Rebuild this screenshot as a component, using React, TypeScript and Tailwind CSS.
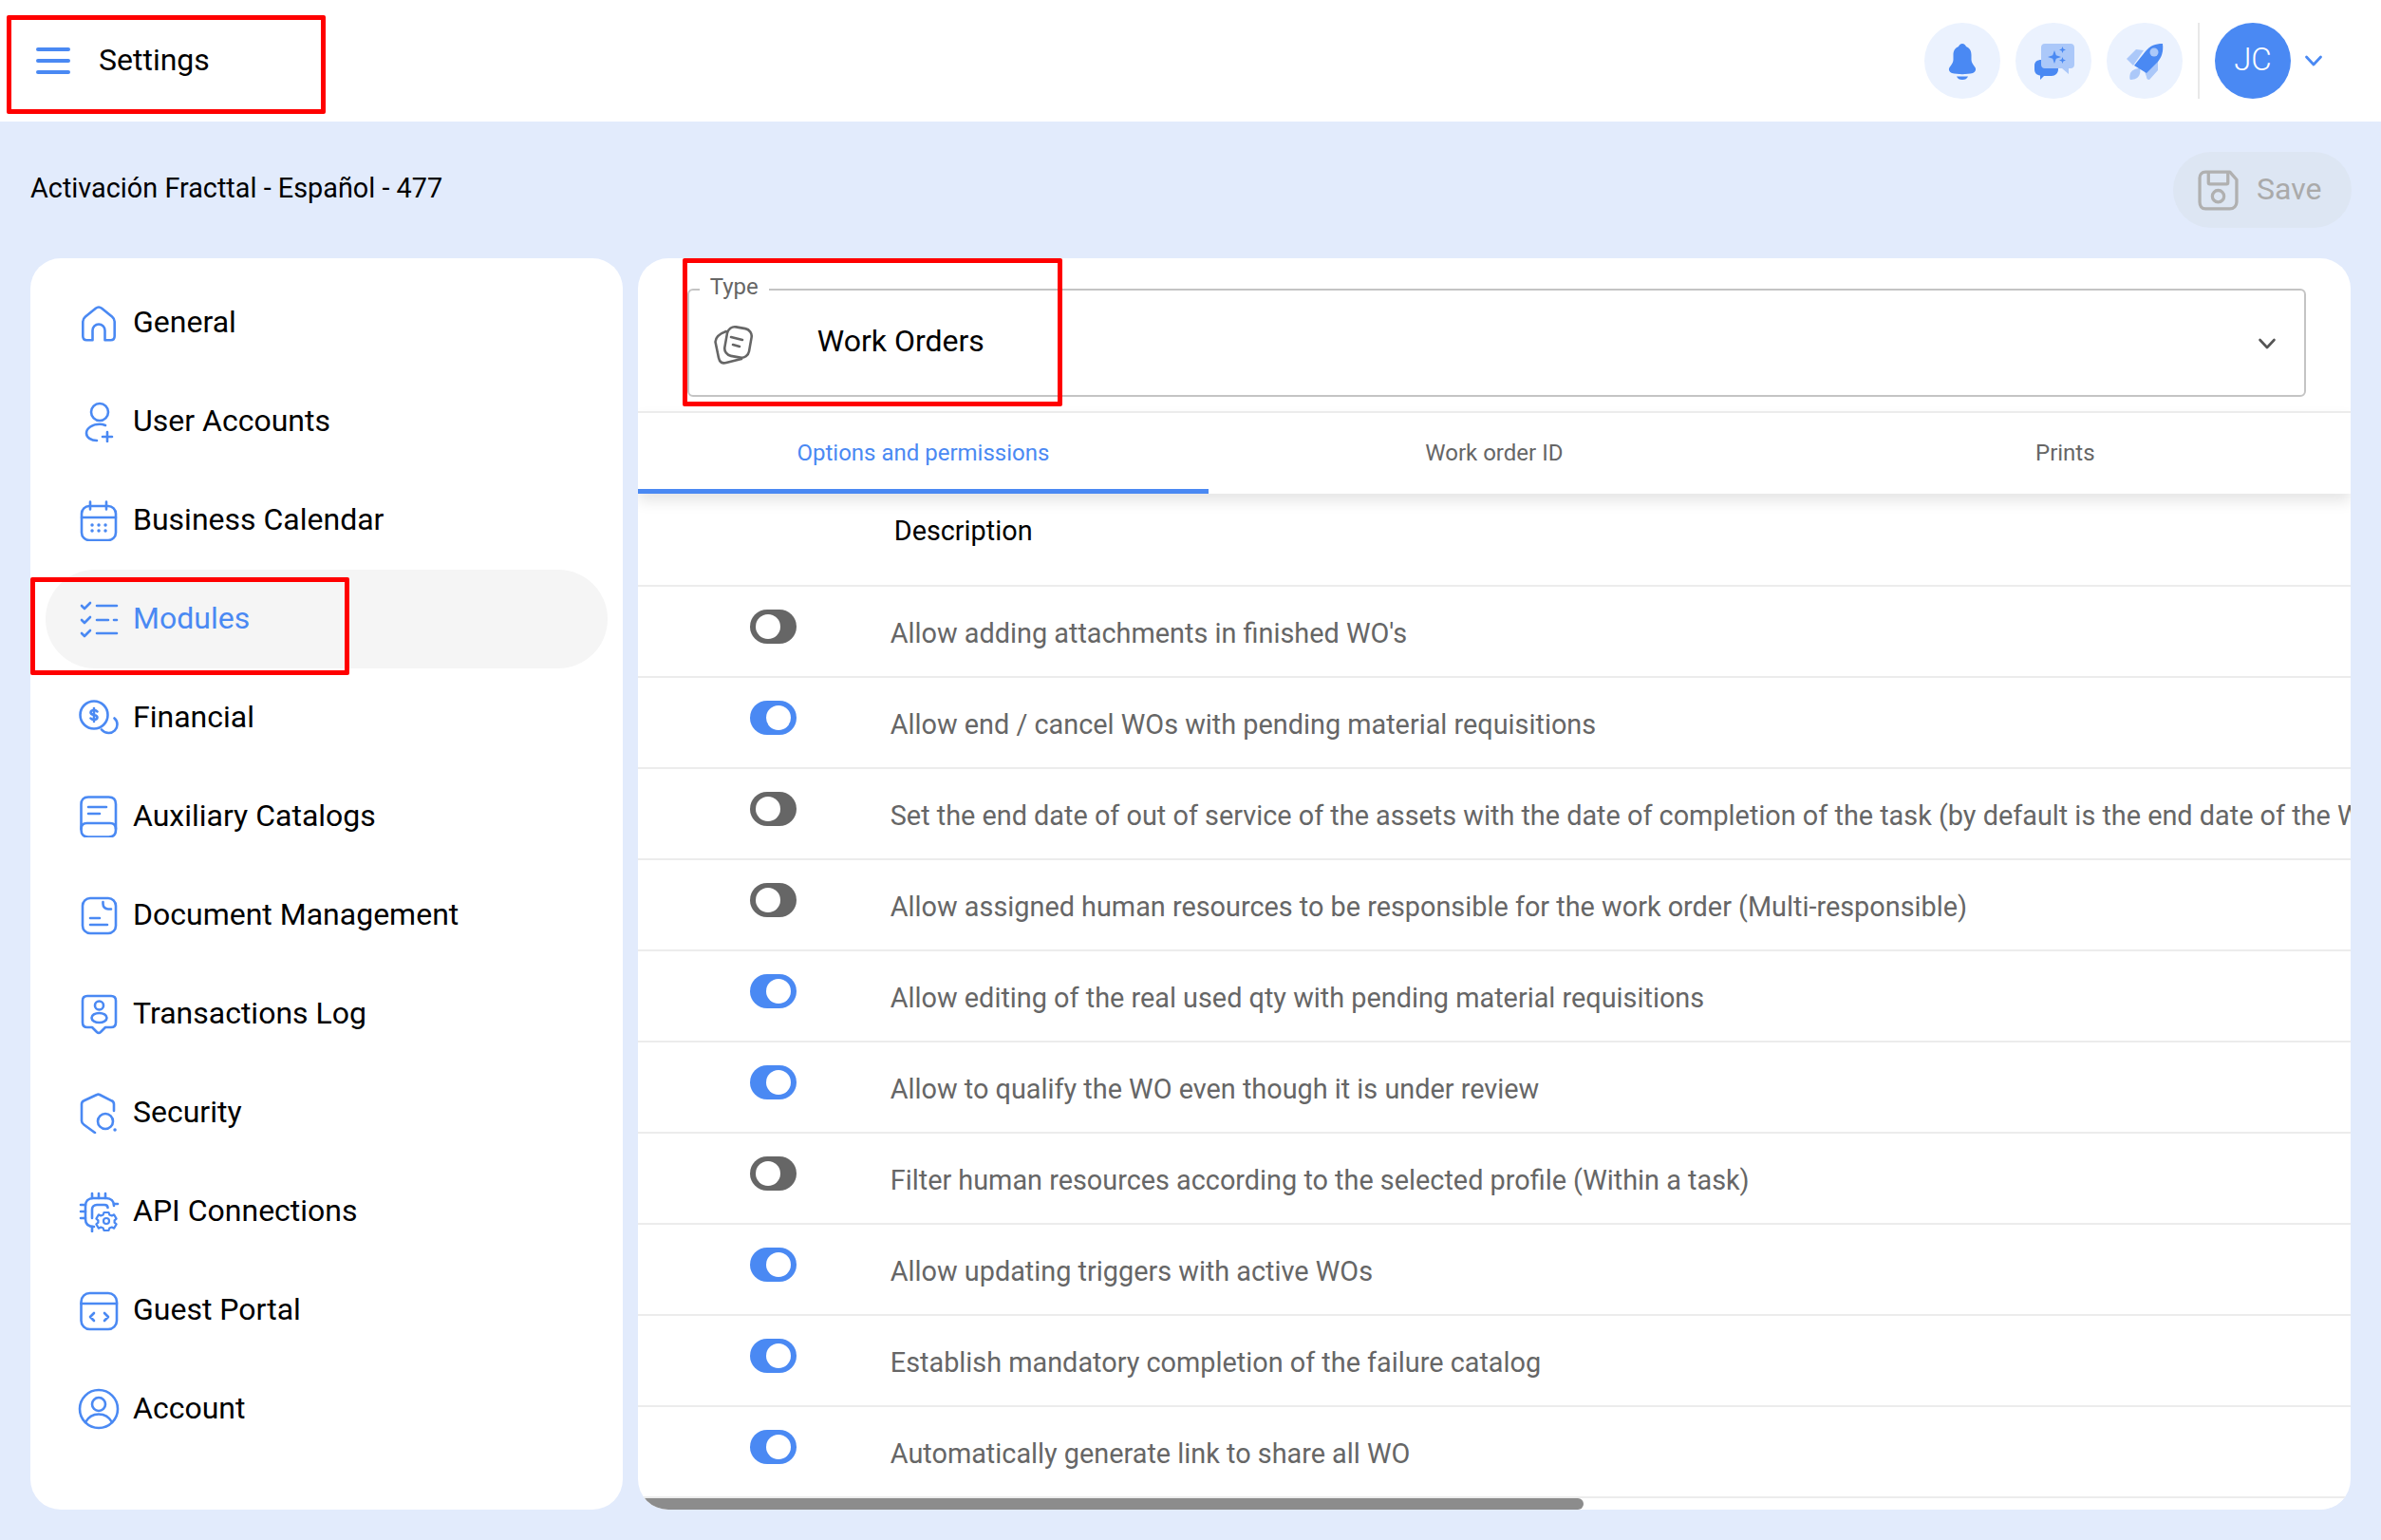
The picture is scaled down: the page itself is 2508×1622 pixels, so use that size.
import * as React from "react";

function Glyph({ children, className = "text-[#4a89f3]" }: { children: React.ReactNode; className?: string }) {
  return (
    <svg
      viewBox="0 0 44 44"
      fill="none"
      stroke="currentColor"
      strokeWidth="2.6"
      strokeLinecap="round"
      strokeLinejoin="round"
      className={`w-[44px] h-[44px] shrink-0 ${className}`}
    >
      {children}
    </svg>
  );
}

const navItems: { label: string; icon: React.ReactNode }[] = [
  {
    label: "General",
    icon: (
      <path d="M22 5.5c-1.2 0-2.2.5-3.2 1.3L8 15.5c-1.9 1.6-2.7 3-2.7 5.2V36c0 2.7 1.5 4.2 4.2 4.2h6V30c0-3.6 2.9-6.5 6.5-6.5s6.5 2.9 6.5 6.5v10.2h6c2.7 0 4.2-1.5 4.2-4.2V20.7c0-2.2-.8-3.6-2.7-5.2L25.2 6.8c-1-.8-2-1.3-3.2-1.3z" />
    ),
  },
  {
    label: "User Accounts",
    icon: (
      <>
        <circle cx="23" cy="12" r="9" />
        <path d="M29 26c-2-.8-4-1.2-6-1.2-7.500 0-14 4-14 9.500 0 4.500 5 7.700 11 7.700" />
        <path d="M31 33v10M26 38h10" />
      </>
    ),
  },
  {
    label: "Business Calendar",
    icon: (
      <>
        <rect x="4" y="7" width="36" height="36" rx="8" />
        <path d="M4 19h36M13 2.500v8M30 2.500v8" />
        <path d="M15 27h.1M22 27h.1M29 27h.1M15 33h.1M22 33h.1M29 33h.1" strokeWidth="3.4" />
      </>
    ),
  },
  {
    label: "Modules",
    icon: (
      <>
        <path d="M4 8l3 3 6-6M4 23l3 3 6-6M4 37l3 3 6-6" />
        <path d="M20 8h21M20 23h12M38 23h3M20 37h21" />
      </>
    ),
  },
  {
    label: "Financial",
    icon: (
      <>
        <circle cx="17" cy="19" r="14.500" />
        <path d="M20.500 15.500c-.7-1-1.900-1.500-3.500-1.500-2 0-3.500 1-3.500 2.500s1.500 2.100 3.500 2.500 3.500 1.100 3.500 2.500-1.500 2.500-3.500 2.500c-1.600 0-2.800-.5-3.500-1.500M17 12v14" />
        <path d="M38.500 22.500c2 1.700 3 4 3 6.500 0 5-4 9-9 9-3 0-5.500-1.200-7.500-3.500" />
      </>
    ),
  },
  {
    label: "Auxiliary Catalogs",
    icon: (
      <>
        <path d="M3.500 36V9c0-4.500 2.500-7.500 7.500-7.500h21.500c5 0 7.500 3 7.500 7.500v27c0 5-2.500 7.500-7.500 7.500H11c-5 0-7.500-2.500-7.500-7.500z" />
        <path d="M3.500 35c0-4 2.500-6 6-6h24.500c3.500 0 6 2 6 6" />
        <path d="M11 12h19M11 19h12" />
      </>
    ),
  },
  {
    label: "Document Management",
    icon: (
      <>
        <rect x="5" y="4" width="35" height="37" rx="8" />
        <path d="M26.500 8v2c0 3.500 2.500 5.500 5.500 5.500h3" />
        <path d="M13 25h10M13 32h18" />
      </>
    ),
  },
  {
    label: "Transactions Log",
    icon: (
      <>
        <path d="M10 3h25c3.500 0 5 1.700 5 5v23c0 3.300-1.500 5-5 5h-6l-5 5c-1.300 1.200-2.700 1.200-4 0l-5-5h-5c-3.500 0-5-1.700-5-5V8c0-3.300 1.500-5 5-5z" />
        <circle cx="22.500" cy="13" r="4.500" />
        <ellipse cx="22.500" cy="26" rx="8" ry="5" />
      </>
    ),
  },
  {
    label: "Security",
    icon: (
      <>
        <path d="M38 20v-7c0-1.800-.8-3-2.500-3.700L23 3c-1-.5-2-.5-3 0L6.500 9.300C4.800 10 4 11.200 4 13v17.500c0 1.800.8 3 2.300 4L18 43" />
        <circle cx="29" cy="31" r="8" />
        <path d="M39 40h.1" strokeWidth="3.400" />
      </>
    ),
  },
  {
    label: "API Connections",
    icon: (
      <>
        <path d="M17 38c-6 0-9-3-9-8V16c0-5 3-8 8-8h14c5 0 8 3 8 8" />
        <path d="M15 29V20c0-3 2-5 5-5h8c2 0 3.500 1 3.500 3" />
        <path d="M15 3v5M22 3v5M29 3v5M3 15h5M3 22h5M3 29h5M38 14h4M15 38v5" />
        <circle cx="30" cy="32" r="3" strokeWidth="2.200" />
        <path
          d="M27.500 23h5l.8 2.500 2.500 1 2.300-1.200 2.500 4.300-2 1.700v2.400l2 1.700-2.500 4.300-2.300-1.200-2.500 1-.8 2.500h-5l-.8-2.500-2.500-1-2.300 1.200-2.500-4.300 2-1.700v-2.400l-2-1.700 2.500-4.300 2.300 1.200 2.500-1z"
          strokeWidth="2.200"
        />
      </>
    ),
  },
  {
    label: "Guest Portal",
    icon: (
      <>
        <rect x="3.500" y="4" width="37.500" height="38" rx="9" />
        <path d="M3.500 15h37.500" />
        <path d="M17 25l-4 4 4 4M28 25l4 4-4 4" />
      </>
    ),
  },
  {
    label: "Account",
    icon: (
      <>
        <circle cx="22" cy="22" r="20" />
        <circle cx="22" cy="17" r="7" />
        <path d="M8 36c3-5.500 8-8.500 14-8.500s11 3 14 8.500" />
      </>
    ),
  },
];

const rows: { on: boolean; text: string }[] = [
  { on: false, text: "Allow adding attachments in finished WO's" },
  { on: true, text: "Allow end / cancel WOs with pending material requisitions" },
  {
    on: false,
    text: "Set the end date of out of service of the assets with the date of completion of the task (by default is the end date of the WO)",
  },
  { on: false, text: "Allow assigned human resources to be responsible for the work order (Multi-responsible)" },
  { on: true, text: "Allow editing of the real used qty with pending material requisitions" },
  { on: true, text: "Allow to qualify the WO even though it is under review" },
  { on: false, text: "Filter human resources according to the selected profile (Within a task)" },
  { on: true, text: "Allow updating triggers with active WOs" },
  { on: true, text: "Establish mandatory completion of the failure catalog" },
  { on: true, text: "Automatically generate link to share all WO" },
];

function Toggle({ on }: { on: boolean }) {
  return (
    <div
      className={`w-[49px] h-[36px] rounded-full flex items-center px-[6px] shrink-0 mb-[10px] ${
        on ? "bg-[#4a89f3] justify-end" : "bg-[#666666] justify-start"
      }`}
    >
      <div className="w-[26px] h-[26px] rounded-full bg-white" />
    </div>
  );
}

function RoundButton({ children }: { children: React.ReactNode }) {
  return <div className="w-[80px] h-[80px] rounded-full bg-[#ebf2fe] flex items-center justify-center">{children}</div>;
}

export default function App() {
  return (
    <div className="relative w-[2508px] h-[1622px] overflow-hidden bg-[#e2ebfc] font-['Roboto',sans-serif]">
      {/* HEADER */}
      <header className="h-[128px] bg-white flex items-center pl-[38px] pr-[59px]">
        <div className="flex flex-col gap-[7.500px] w-[36px]">
          <div className="h-[4.500px] rounded-full bg-[#4a89f3]" />
          <div className="h-[4.500px] rounded-full bg-[#4a89f3]" />
          <div className="h-[4.500px] rounded-full bg-[#4a89f3]" />
        </div>
        <span className="ml-[30px] -mt-[3px] text-[32px] text-black">Settings</span>

        <div className="ml-auto flex items-center gap-[16px]">
          <RoundButton>
            <svg viewBox="0 0 40 40" className="w-[40px] h-[40px] fill-[#4a89f3]">
              <path d="M20 2c-2 0-3.500 1.500-4 3-4 1.500-5.500 5-5.500 9v5c0 3-2 5-4 8-1.500 2.500 0 5 2.500 6 6 1.500 16 1.500 22 0 2.500-1 4-3.500 2.500-6-2-3-4-5-4-8v-5c0-4-1.500-7.500-5.500-9-.5-1.500-2-3-4-3z" />
              <path d="M14 36.500h12c-1 2.500-3 3.500-6 3.500s-5-1-6-3.500z" />
            </svg>
          </RoundButton>
          <RoundButton>
            <svg viewBox="0 0 44 44" className="w-[44px] h-[44px]">
              <path
                d="M9 21c5-1 18-1 18 0v10c0 4-3 7-7 7H12l-4 4v-4.500c-4-.5-6-3-6-6.500v-4c0-4 3-6 7-6z"
                fill="#4a89f3"
              />
              <path
                d="M13 4h27c2.500 0 4 1.500 4 4v18c0 2.500-1.500 4-4 4h-2v6l-7-6H13c-2.500 0-4-1.500-4-4V8c0-2.500 1.500-4 4-4z"
                fill="#abc8f9"
              />
              <path
                d="M23 11l1.800 5.200L30 18l-5.200 1.800L23 25l-1.800-5.200L16 18l5.200-1.800zM31.500 7l.9 2.600 2.600.9-2.600.9-.9 2.600-.9-2.600-2.600-.9 2.600-.9zM31.500 18l.9 2.600 2.600.9-2.600.9-.9 2.600-.9-2.600-2.600-.9 2.600-.9z"
                fill="#4a89f3"
              />
            </svg>
          </RoundButton>
          <RoundButton>
            <svg viewBox="0 0 44 44" className="w-[44px] h-[44px]">
              <path d="M3 20l10-10 8 1L10 27z" fill="#abc8f9" />
              <path d="M36 19v13l-9 10c-2 0-3-1-3-3l-2-6z" fill="#abc8f9" />
              <path d="M17 30c-3 0-8 1-10 5-1 3-1 6 0 7 3 0 7-1 9-4 1-2 2-5 1-8z" fill="#abc8f9" />
              <path d="M41 4c1 8-1 14-5 19L24 35 11 27l12-15C28 6 33 4 41 4z" fill="#4a89f3" />
              <circle cx="32" cy="13" r="4.500" fill="#abc8f9" />
            </svg>
          </RoundButton>
          <div className="w-[2px] h-[80px] bg-[#e8e8e8]" />
          <div className="w-[80px] h-[80px] rounded-full bg-[#4a89f3] flex items-center justify-center pb-[3px] text-[33px] font-light text-white">
            JC
          </div>
          <svg
            viewBox="0 0 24 24"
            fill="none"
            stroke="#4a89f3"
            strokeWidth="2.800"
            strokeLinecap="round"
            strokeLinejoin="round"
            className="w-[24px] h-[24px] -ml-[4px]"
          >
            <path d="M4.500 8l7.500 8 7.500-8" />
          </svg>
        </div>
      </header>

      {/* TITLE BAR */}
      <div className="h-[144px] pl-[32px] pr-[31px] flex items-center justify-between">
        <span className="text-[28.840px] text-black -mt-[2px]">Activación Fracttal - Español - 477</span>
        <button className="h-[80px] w-[188px] rounded-full bg-[#dde6f3] flex items-center pl-[26px] gap-[19px] text-[32px] text-[#aaaaaa]">
          <svg
            viewBox="0 0 42 42"
            fill="none"
            stroke="#b0b0b0"
            strokeWidth="3.200"
            strokeLinejoin="round"
            className="w-[43px] h-[43px] shrink-0"
          >
            <path d="M8 2h25l7 8v23c0 4-3 7-7 7H8c-4 0-6-3-6-7V8c0-3 2-6 6-6z" />
            <path d="M11 2v11c0 1 .5 1.500 1.500 1.500h17c1 0 1.500-.5 1.500-1.500V3" />
            <circle cx="21" cy="27" r="6" />
          </svg>
          <span className="-mt-[3px]">Save</span>
        </button>
      </div>

      <div className="flex gap-[16px] px-[32px]">
        {/* SIDEBAR */}
        <aside className="w-[624px] h-[1318px] bg-white rounded-[32px] pt-[16px] px-[16px]">
          {navItems.map((item) => (
            <div
              key={item.label}
              className={`h-[104px] flex items-center rounded-full pl-[34px] gap-[14px] text-[32px] ${
                item.label === "Modules" ? "bg-[#f5f5f5] text-[#4a89f3]" : "text-black"
              }`}
            >
              <Glyph>{item.icon}</Glyph>
              <span className="-mt-[2px]">{item.label}</span>
            </div>
          ))}
        </aside>

        {/* MAIN CARD */}
        <main className="w-[1805px] h-[1318px] bg-white rounded-[32px] overflow-hidden flex flex-col">
          <div className="h-[161px] pt-[32px] pl-[52px] pr-[47px] shrink-0">
            <div className="relative h-[114px] border-2 border-[#c4c4c4] rounded-[6px] flex items-center pl-[25px] pb-[4px]">
              <span className="absolute left-[11px] -top-[19px] bg-white px-[11px] text-[24px] leading-[30px] text-[#666666]">
                Type
              </span>
              <Glyph className="text-[#666666] mt-[8px]">
                <rect x="13.500" y="4" width="26" height="31" rx="8" transform="rotate(10 26.500 19.500)" />
                <path d="M14 8C8 10 3 13 2.500 19L6 36c1 5 4 6 8 5l16-4" />
                <path d="M19 14l12 3M21 22l7 2" />
              </Glyph>
              <span className="ml-[66px] text-[32px] text-black">Work Orders</span>
              <svg
                viewBox="0 0 24 24"
                fill="none"
                stroke="#555555"
                strokeWidth="2.600"
                strokeLinecap="round"
                strokeLinejoin="round"
                className="w-[24px] h-[24px] ml-auto mr-[27px] mt-[6px]"
              >
                <path d="M4.500 8l7.500 8 7.500-8" />
              </svg>
            </div>
          </div>

          {/* TABS */}
          <div className="relative z-10 h-[87px] shrink-0 grid grid-cols-3 border-t-2 border-[#ececec] bg-white shadow-[0_8px_14px_rgba(0,0,0,0.1)] text-[24px]">
            <div className="flex items-center justify-center pt-[3px] text-[#4a89f3] border-b-[5px] border-[#4a89f3]">
              Options and permissions
            </div>
            <div className="flex items-center justify-center pt-[3px] text-[#666666] border-b-[5px] border-transparent">
              Work order ID
            </div>
            <div className="flex items-center justify-center pt-[3px] text-[#666666] border-b-[5px] border-transparent">
              Prints
            </div>
          </div>

          <div className="h-[98px] shrink-0 flex items-center pl-[270px] pb-[16px] border-b-2 border-[#ececec] text-[28.800px] text-black">
            Description
          </div>

          {rows.map((row, i) => (
            <div
              key={i}
              className="h-[96px] shrink-0 flex items-center pl-[118px] gap-[99px] border-b-2 border-[#ececec] overflow-hidden"
            >
              <Toggle on={row.on} />
              <span className="whitespace-nowrap mt-[6px] text-[28.840px] text-[#666666]">{row.text}</span>
            </div>
          ))}

          {/* horizontal scrollbar */}
          <div className="h-[12px] shrink-0 bg-white">
            <div className="w-[996px] h-full bg-[#8c8c8c] rounded-r-full" />
          </div>
        </main>
      </div>

      {/* annotation boxes */}
      <div className="absolute left-[7px] top-[16px] w-[336px] h-[104px] border-[5px] border-[#ff0000] rounded-[2px] pointer-events-none" />
      <div className="absolute left-[32px] top-[608px] w-[336px] h-[103px] border-[5px] border-[#ff0000] rounded-[2px] pointer-events-none" />
      <div className="absolute left-[719px] top-[272px] w-[400px] h-[156px] border-[5px] border-[#ff0000] rounded-[2px] pointer-events-none" />
    </div>
  );
}
